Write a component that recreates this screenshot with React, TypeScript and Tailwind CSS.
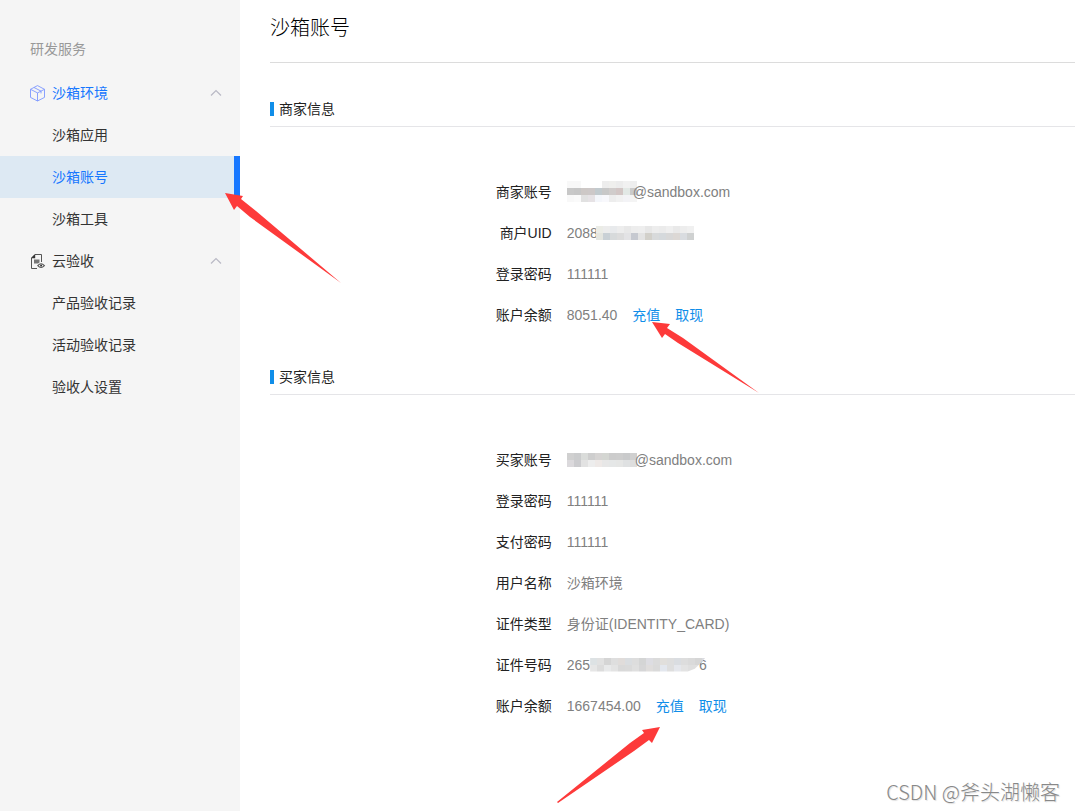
import type { ReactNode } from "react";

type MenuGroup = {
  title: string;
  icon: ReactNode;
  active?: boolean;
  items: string[];
};

type MosaicProps = {
  rows: string[][];
  cell?: number;
  className?: string;
};

const BoxIcon = () => (
  <svg width="16" height="17" viewBox="0 0 16 17" fill="none" stroke="#7d97ff" strokeWidth="0.9">
    <path d="M7.5 0.6 14.5 4.3V12.4L7.5 16 0.5 12.4V4.3Z" />
    <path d="M0.5 4.3 7.5 7.9 14.5 4.3M7.5 7.9V16M4 2.5 11 6.1V8.4" />
  </svg>
);

const ReportIcon = () => (
  <svg width="16" height="17" viewBox="0 0 16 17" fill="none" stroke="#555">
    <path d="M7 15.5H1.5V5L5 1.5H11.5V9" />
    <path d="M1 5.2 5.2 1V5.2Z" fill="#333" stroke="none" />
    <path d="M4 6.5H9.5V9.5L8 10.5H4Z" fill="#777" stroke="none" />
    <path d="M7.8 12.6Q11 9 14.4 12.6Q11 16.2 7.8 12.6Z" fill="#f5f5f5" strokeWidth="1.1" />
    <circle cx="11.1" cy="12.6" r="1" fill="#333" stroke="none" />
  </svg>
);

const ChevronUp = () => (
  <svg width="12" height="8" viewBox="0 0 12 8" fill="none" stroke="#b9b9c5">
    <path d="M1 6.5 6 1.5 11 6.5" strokeWidth="1.2" />
  </svg>
);

// Pixelated patch that hides part of a value
const Mosaic = ({ rows, cell = 7, className = "" }: MosaicProps) => (
  <svg
    width={rows[0].length * cell}
    height={rows.length * cell}
    shapeRendering="crispEdges"
    aria-hidden="true"
    className={`shrink-0 ${className}`}
  >
    {rows.map((row, y) =>
      row.map((color, x) => (
        <rect
          key={`${x}-${y}`}
          x={x * cell}
          y={y * cell}
          width={cell}
          height={cell}
          fill={color}
        />
      ))
    )}
  </svg>
);

const sellerMosaic = [
  ["#f8f8f8", "#f8f8f8", "#fff", "#fff", "#fff", "#ededed", "#efefed", "#ececec", "#f1f1f1", "#eeeeee"],
  ["#c8c8c8", "#c6c6c6", "#cdc8c6", "#cdc8c8", "#c2cace", "#c8c8c8", "#d0cccb", "#d2c6c5", "#e2e8e5", "#cacaca"],
  ["#f8f8f8", "#fafafa", "#e1e1e1", "#e6e2e5", "#f4f6fb", "#f8f8fc", "#ededed", "#f1f1f1", "#f3f3f6", "#f4f4f4"],
];

const uidMosaic = [
  ["#ebece6", "#ececec", "#e8eaec", "#ededed", "#e8e8e8", "#ededed", "#eeeeee", "#e7e7e7", "#ededed", "#ebebeb", "#efefef", "#e9e9e9", "#ededed", "#f0f0f0"],
  ["#e4e5df", "#c9d0d5", "#d7dadb", "#dcdcdc", "#e3e3e5", "#c6c9d0", "#e3e3e3", "#d2d0ca", "#d8dadb", "#d5d9dc", "#d8d8d8", "#dcd8d5", "#d9dce0", "#cfd1d1"],
];

const buyerMosaic = [
  ["#d0d0d0", "#cbcccd", "#dadcda", "#cecece", "#d6d4d3", "#d4d6d2", "#cccccc", "#cdcdcd", "#c9cacb", "#d0d0d0"],
  ["#dbd9dc", "#cccccf", "#e2e2e2", "#ededed", "#eee9e7", "#e7e7e7", "#e5e7e7", "#e5e6e5", "#dfe1e2", "#dedede"],
];

const idMosaic = [
  ["#dde2e4", "#e1e1e1", "#d5d5d5", "#dedede", "#e0dcda", "#dadde0", "#dddddd", "#d4d5d5", "#dddde2", "#dbdbdb", "#e1dfdc", "#dedede", "#dadde1", "#dddddd", "#dadada", "#d6d6d6", "#dadbe0"],
  ["#e6e6e6", "#dcdcdc", "#e8e9ea", "#e3e3e3", "#d9d9d9", "#dadada", "#dfdfdf", "#d6d6d7", "#dfdddc", "#dadada", "#e3e7ee", "#dedede", "#e5e7ec", "#e3e3e3", "#dfdfdf", "#e0e0e0", "#dedede"],
];

const menu: MenuGroup[] = [
  {
    title: "沙箱环境",
    icon: <BoxIcon />,
    active: true,
    items: ["沙箱应用", "沙箱账号", "沙箱工具"],
  },
  {
    title: "云验收",
    icon: <ReportIcon />,
    items: ["产品验收记录", "活动验收记录", "验收人设置"],
  },
];

const currentItem = "沙箱账号";

const Sidebar = () => (
  <aside className="w-60 shrink-0 bg-[#f5f5f5]">
    <div className="pt-[39px] pb-[13px] pl-[30px] leading-5 text-[#999]">研发服务</div>
    <nav>
      {menu.map((group) => (
        <div key={group.title}>
          <button
            type="button"
            className={`flex h-[42px] w-full items-center pr-[18px] pl-[30px] ${
              group.active ? "text-[#1677ff]" : "text-[#333]"
            }`}
          >
            {group.icon}
            <span className="ml-1.5">{group.title}</span>
            <span className="ml-auto">
              <ChevronUp />
            </span>
          </button>
          {group.items.map((item) => (
            <a
              key={item}
              href="#"
              className={`flex h-[42px] items-center pl-[52px] ${
                item === currentItem
                  ? "border-r-6 border-[#1677ff] bg-[#dde9f3] text-[#1677ff]"
                  : "text-[#333]"
              }`}
            >
              {item}
            </a>
          ))}
        </div>
      ))}
    </nav>
  </aside>
);

const Section = ({ title, children }: { title: string; children: ReactNode }) => (
  <section>
    <h2 className="flex items-center border-b border-[#e5e5e8] pb-[7px] leading-5 text-[#222]">
      <span className="mr-[5px] h-3.5 w-1 bg-[#108ee9]"></span>
      {title}
    </h2>
    <dl className="mt-11">{children}</dl>
  </section>
);

const Row = ({ label, children }: { label: string; children: ReactNode }) => (
  <div className="flex h-[41px] items-center">
    <dt className="w-[35%] text-right text-[#222]">{label}</dt>
    <dd className="ml-[15px] flex items-center text-[#808080]">{children}</dd>
  </div>
);

const Balance = ({ amount }: { amount: string }) => (
  <>
    {amount}
    <a href="#" className="ml-[15px] text-[#108ee9]">充值</a>
    <a href="#" className="ml-[15px] text-[#108ee9]">取现</a>
  </>
);

const Arrow = ({ className, points }: { className: string; points: string }) => (
  <svg
    width="120"
    height="92"
    viewBox="0 0 120 92"
    aria-hidden="true"
    className={`pointer-events-none absolute ${className}`}
  >
    <polygon points={points} fill="#fd3a3a" />
  </svg>
);

export default function App() {
  return (
    <div className="relative flex min-h-screen bg-white font-['Liberation_Sans','Noto_Sans_CJK_SC',sans-serif] text-sm">
      <Sidebar />

      <main className="flex-1 pl-[30px]">
        <h1 className="mb-9 border-b border-[#dcdcdc] pt-3 pb-[18px] text-xl leading-8 font-light text-black">
          沙箱账号
        </h1>

        <div className="flex flex-col gap-8">
          <Section title="商家信息">
            <Row label="商家账号">
              <Mosaic rows={sellerMosaic} />
              <span className="relative -ml-1">@sandbox.com</span>
            </Row>
            <Row label="商户UID">
              2088
              <Mosaic rows={uidMosaic} className="relative -ml-0.5" />
            </Row>
            <Row label="登录密码">111111</Row>
            <Row label="账户余额">
              <Balance amount="8051.40" />
            </Row>
          </Section>

          <Section title="买家信息">
            <Row label="买家账号">
              <Mosaic rows={buyerMosaic} />
              <span className="relative -ml-0.5">@sandbox.com</span>
            </Row>
            <Row label="登录密码">111111</Row>
            <Row label="支付密码">111111</Row>
            <Row label="用户名称">沙箱环境</Row>
            <Row label="证件类型">身份证(IDENTITY_CARD)</Row>
            <Row label="证件号码">
              265
              <Mosaic
                rows={idMosaic}
                className="relative -mr-2.5 [clip-path:polygon(0_0,97%_0,93%_40%,88%_80%,82%_100%,0_100%)]"
              />
              6
            </Row>
            <Row label="账户余额">
              <Balance amount="1667454.00" />
            </Row>
          </Section>
        </div>
      </main>

      <Arrow
        className="top-[192px] left-[224px]"
        points="1,1 19,4 17,7 32,19 117,91 26,25 13,14 10,18"
      />
      <Arrow
        className="top-[321px] left-[651px]"
        points="1,1 19,3 16,7 32,17 108,72 27,22 14,13 11,17"
      />
      <Arrow
        className="top-[726px] left-[556px]"
        points="104,1 96,17 93,14 78,25 2,77 1,76 74,17 88,7 86,4"
      />

      <div className="absolute right-[15px] bottom-1 font-['Noto_Sans_CJK_SC',sans-serif] text-xl leading-[30px] font-light text-[#888] [text-shadow:1px_1px_1px_#ddd]">
        CSDN @斧头湖懒客
      </div>
    </div>
  );
}
